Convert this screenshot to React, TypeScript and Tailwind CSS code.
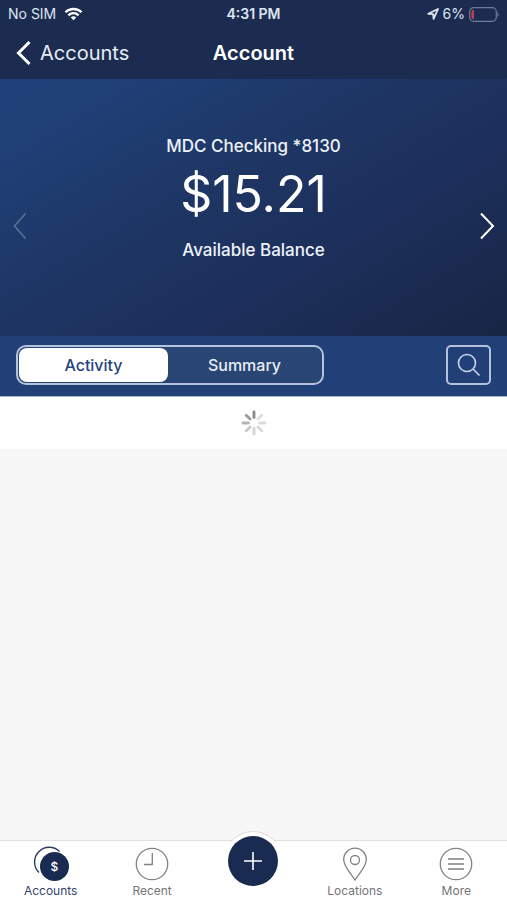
import { useState } from "react";
import clsx from "clsx";

const views = ["Activity", "Summary"];

const spokes = [
  "#8a8a8a",
  "#dcdcdc",
  "#dcdcdc",
  "#dadada",
  "#d4d4d4",
  "#c8c8c8",
  "#b4b4b4",
  "#9c9c9c"
];

function StatusBar() {
  return (
    <div className="grid h-7 grid-cols-3 items-center px-2 text-sm text-[#dfe5f0]">
      <div className="flex items-center gap-2">
        <span>No SIM</span>
        <svg width="19" height="14" viewBox="0 0 20 14" fill="none" stroke="#fff" strokeWidth="2.4">
          <path d="M1.5 5.2a12.2 12.2 0 0 1 17 0" />
          <path d="M4.6 8.4a7.7 7.7 0 0 1 10.8 0" />
          <path d="M10 13.6 7.1 10.7a4.2 4.2 0 0 1 5.8 0Z" fill="#fff" stroke="none" />
        </svg>
      </div>
      <span className="text-center font-semibold">4:31 PM</span>
      <div className="flex items-center justify-end gap-1">
        <svg width="12" height="12" viewBox="0 0 12 12" fill="none" stroke="currentColor" strokeWidth="1.8" strokeLinejoin="round">
          <path d="M1.2 5.8 11 1 6.6 10.8 6.2 6.2Z" />
        </svg>
        <span>6%</span>
        <svg width="30" height="15" viewBox="0 0 30 15" fill="none">
          <rect x="0.7" y="0.7" width="26.6" height="13.6" rx="4" stroke="#6e7b98" strokeWidth="1.2" />
          <path d="M5 3v9H4a2 2 0 0 1-1.6-2V5A2 2 0 0 1 4 3Z" fill="#c33f46" />
          <path d="M28.4 5.2c1.6.6 1.6 4 0 4.6Z" fill="#6e7b98" />
        </svg>
      </div>
    </div>
  );
}

function Header() {
  return (
    <header className="bg-[#1b2c50]">
      <StatusBar />
      <div className="grid h-[51px] grid-cols-[1fr_auto_1fr] items-center px-4 pb-0.5 text-xl">
        <a href="#accounts" className="flex items-center gap-2 text-[#e8edf6]">
          <svg width="16" height="26" viewBox="0 0 16 26" fill="none" stroke="#fff" strokeWidth="3">
            <path d="M13.5 2 2.5 13l11 11" />
          </svg>
          Accounts
        </a>
        <h1 className="font-semibold text-white">Account</h1>
      </div>
    </header>
  );
}

function Balance() {
  return (
    <section className="flex h-[257px] items-center justify-between bg-[linear-gradient(149deg,#1f4079_0%,#1f3f76_15%,#1e3664_42%,#1d2f5b_65%,#182645_100%)] px-3 text-[#eef2fa]">
      <button aria-label="Previous account" disabled className="pt-9">
        <svg width="16" height="28" viewBox="0 0 16 28" fill="none" stroke="#5d7095" strokeWidth="1.6">
          <path d="M13.5 1.5 2.5 14l11 12.5" />
        </svg>
      </button>
      <div className="flex flex-col items-center pb-8 pt-3">
        <p className="text-[17px] font-medium leading-6">MDC Checking *8130</p>
        <p className="mb-4 mt-2 text-[50px] leading-[56px] text-white">$15.21</p>
        <p className="text-[17px] font-medium leading-6">Available Balance</p>
      </div>
      <button aria-label="Next account" className="pt-9">
        <svg width="16" height="28" viewBox="0 0 16 28" fill="none" stroke="#fff" strokeWidth="2">
          <path d="M2 1.5 14 14 2 26.5" />
        </svg>
      </button>
    </section>
  );
}

function ViewBar() {
  const [view, setView] = useState("Activity");

  return (
    <div className="flex items-center justify-between border-b border-[#a3b3d0] bg-[#204077] px-4 pb-[11px] pt-[9px]">
      <div className="flex h-10 w-[308px] rounded-[10px] border-2 border-[#b4c2dc] bg-[#294573] p-px">
        {views.map((v) => (
          <button
            key={v}
            aria-pressed={view === v}
            onClick={() => setView(v)}
            className={clsx(
              "rounded-lg text-base font-medium",
              view === v ? "flex-[149] bg-white text-[#27447c]" : "flex-[153] text-[#e8edf6]"
            )}
          >
            {v}
          </button>
        ))}
      </div>
      <button
        aria-label="Search"
        className="flex h-10 w-[45px] items-center justify-center rounded-[5px] border-2 border-[#b4c2dc]"
      >
        <svg width="24" height="24" viewBox="0 0 24 24" fill="none" stroke="#c9d5ea" strokeWidth="1.6">
          <circle cx="10" cy="10" r="8.5" />
          <path d="m16 16 6.5 6.5" />
        </svg>
      </button>
    </div>
  );
}

function Spinner() {
  return (
    <svg width="26" height="26" viewBox="-13 -13 26 26" role="status" aria-label="Loading">
      {spokes.map((color, i) => (
        <path key={i} d="M0-5.5v-5.5" stroke={color} strokeWidth="2.8" strokeLinecap="round" transform={`rotate(${i * 45})`} />
      ))}
    </svg>
  );
}

function AccountsIcon() {
  return (
    <svg width="36" height="36" viewBox="0 0 36 36" fill="none">
      <path d="M6 26.5A14.6 14.6 0 1 1 26.5 5.5" stroke="#2b3b66" strokeWidth="1.4" />
      <circle cx="21.5" cy="20.5" r="14.5" fill="#1a2b52" />
      <text x="21.5" y="25" textAnchor="middle" fontSize="12" fontWeight="500" fill="#fff">$</text>
    </svg>
  );
}

function RecentIcon() {
  return (
    <svg width="34" height="34" viewBox="0 0 34 34" fill="none" stroke="#818181" strokeWidth="1.3">
      <circle cx="17" cy="17" r="15.7" />
      <path d="M17.3 6v11.5H9" />
    </svg>
  );
}

function LocationsIcon() {
  return (
    <svg width="34" height="34" viewBox="0 0 34 34" fill="none" stroke="#818181" strokeWidth="1.3">
      <path d="M17 33C13.5 27 5.7 20 5.7 12.5a11.3 11.3 0 0 1 22.6 0C28.3 20 20.5 27 17 33Z" />
      <circle cx="17" cy="13" r="4.5" />
    </svg>
  );
}

function MoreIcon() {
  return (
    <svg width="34" height="34" viewBox="0 0 34 34" fill="none" stroke="#818181" strokeWidth="1.3">
      <circle cx="17" cy="17" r="15.7" />
      <path d="M9 12h16M9 17h16M9 22h16" />
    </svg>
  );
}

const tabs = [
  { label: "Accounts", icon: AccountsIcon, active: true },
  { label: "Recent", icon: RecentIcon },
  null,
  { label: "Locations", icon: LocationsIcon },
  { label: "More", icon: MoreIcon }
];

function TabBar() {
  return (
    <nav className="relative grid h-[60px] grid-cols-5 border-t border-[#e0e0e0] bg-white">
      {tabs.map((tab) =>
        tab ? (
          <a
            key={tab.label}
            href={`#${tab.label.toLowerCase()}`}
            className={clsx(
              "flex flex-col items-center pt-1 text-xs leading-4",
              tab.active ? "text-[#36446b]" : "text-[#757575]"
            )}
          >
            <span className="flex h-[38px] items-center">
              <tab.icon />
            </span>
            {tab.label}
          </a>
        ) : (
          <div key="add" className="relative flex justify-center">
            {/* raised rim around the add button */}
            <svg className="absolute -top-[10px]" width="60" height="11" viewBox="0 0 60 11">
              <circle cx="30" cy="30" r="29.5" fill="#fff" stroke="#dcdcdc" />
            </svg>
            <button
              aria-label="Add"
              className="absolute -top-[5px] flex size-[50px] items-center justify-center rounded-full bg-[#1a2b52]"
            >
              <svg width="20" height="20" viewBox="0 0 20 20" stroke="#fff" strokeWidth="1.6">
                <path d="M10 1v18M1 10h18" />
              </svg>
            </button>
          </div>
        )
      )}
    </nav>
  );
}

export default function App() {
  return (
    <div className="flex min-h-screen flex-col bg-[#f7f7f7] font-[Inter,sans-serif]">
      <Header />
      <Balance />
      <ViewBar />
      <main className="flex-1">
        <div className="flex h-[52px] items-center justify-center bg-white">
          <Spinner />
        </div>
      </main>
      <TabBar />
    </div>
  );
}
